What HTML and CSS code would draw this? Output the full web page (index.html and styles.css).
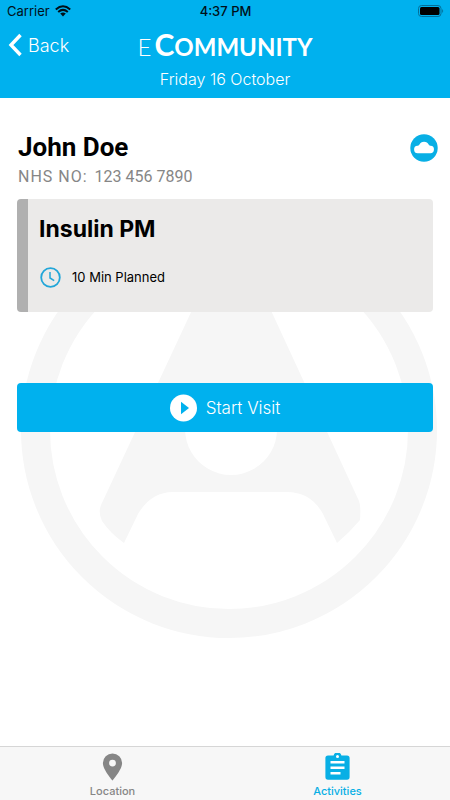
FILE: index.html
```html
<!DOCTYPE html>
<html lang="en">
<head>
<meta charset="utf-8">
<meta name="viewport" content="width=device-width, initial-scale=1">
<title>eCommunity</title>
<link rel="stylesheet" href="styles.css">
</head>
<body>
<header class="header">
  <div class="status">
    <div class="carrier">
      <span>Carrier</span>
      <svg width="16" height="12" viewBox="0 0 16 12" aria-hidden="true"><g fill="none" stroke="#001018" stroke-width="2"><path d="M.8 4.4Q8-2 15.2 4.4"/><path d="M3.2 7Q8 2.8 12.8 7"/></g><path fill="#001018" d="M5.2 8.6Q8 6.3 10.8 8.6L8 11.6z"/></svg>
    </div>
    <time class="clock">4:37 PM</time>
    <svg class="battery" width="26" height="12" viewBox="0 0 26 12" aria-hidden="true"><rect x=".5" y=".5" width="22.5" height="11" rx="3" fill="none" stroke="#036f98"/><rect x="2" y="2" width="19.5" height="8" rx="1.5" fill="#000"/><path fill="#036f98" d="M24.2 4v4q2-2 0-4"/></svg>
  </div>
  <div class="nav">
    <button class="back" type="button">
      <svg width="14" height="24" viewBox="0 0 14 24" aria-hidden="true"><path d="M12.500 2 3 12l9.500 10" fill="none" stroke="#fff" stroke-width="3.400"/></svg>
      <span>Back</span>
    </button>
    <h1 class="brand"><span class="brand-e">E</span><span class="brand-c">C</span>OMMUNITY</h1>
  </div>
  <p class="date">Friday 16 October</p>
</header>

<main class="main">
  <svg class="watermark" width="416" height="416" viewBox="0 0 416 416" aria-hidden="true">
    <circle cx="208" cy="208" r="193.5" fill="none" stroke="#f6f6f6" stroke-width="29"/>
    <path fill="#f6f6f6" fill-rule="evenodd" d="M186 56H235L338 279Q340 284 339 298Q329 310 316 321L302 292Q290 270 266 270H152Q130 270 117 292L103 321Q89 311 81 299Q77 291 80 283ZM210 161a46 46 0 1 0 .1 0z"/>
  </svg>
  <section class="patient">
    <div>
      <h2 class="name">John Doe</h2>
      <p class="nhs"><span class="nhs-label">NHS NO:</span><span>123 456 7890</span></p>
    </div>
    <svg class="cloud" width="28" height="28" viewBox="0 0 28 28" role="img" aria-label="Synced"><circle cx="14" cy="14" r="13.7" fill="#08afe5"/><path fill="#fff" d="M8 19.200a3.700 3.700 0 0 1-.4-7.400q1-.2 1.700-1a5.200 5.200 0 0 1 9.500 0q.7.900 1.700 1a3.700 3.700 0 0 1-.5 7.400z"/></svg>
  </section>
  <article class="card">
    <h3 class="task">Insulin PM</h3>
    <p class="planned">
      <svg width="22" height="22" viewBox="0 0 22 22" aria-hidden="true"><g fill="none" stroke="#22a6d8"><circle cx="11.5" cy="11.5" r="9.3" stroke-width="1.8"/><path d="M11 6v6l4.200 2.600" stroke-width="1.500"/></g></svg>
      <span>10 Min Planned</span>
    </p>
  </article>
  <button class="start" type="button">
    <svg width="28" height="28" viewBox="0 0 28 28" aria-hidden="true"><circle cx="13.5" cy="14" r="13.5" fill="#fff"/><path fill="#00b1ee" d="M11 7.800 19 14l-8 6.200z"/></svg>
    <span>Start Visit</span>
  </button>
</main>

<nav class="tabs">
  <a class="tab" href="#location">
    <svg width="26" height="28" viewBox="0 0 26 28" aria-hidden="true"><path fill="#868686" fill-rule="evenodd" d="M12.500.5a9.600 9.600 0 0 0-9.600 9.600c0 6.900 9.600 17.500 9.600 17.500s9.600-10.600 9.600-17.500A9.600 9.600 0 0 0 12.500.5zm0 6.200a3.400 3.400 0 1 1 0 6.800 3.400 3.400 0 0 1 0-6.800z"/></svg>
    <span>Location</span>
  </a>
  <a class="tab tab-active" href="#activities" aria-current="page">
    <svg width="26" height="28" viewBox="0 0 26 28" aria-hidden="true"><path fill="#08afe5" d="M3 2.500h5.600a4 4 0 0 1 7.800 0H22a2.600 2.600 0 0 1 2.600 2.600v19A2.600 2.600 0 0 1 22 26.700H3a2.600 2.600 0 0 1-2.600-2.600v-19A2.600 2.600 0 0 1 3 2.500z"/><circle cx="12.500" cy="3.600" r="1.500" fill="#fff"/><path d="M5.500 9.200h14M5.500 14.700h14M5.500 20.200h10" stroke="#fff" stroke-width="2.600"/></svg>
    <span>Activities</span>
  </a>
</nav>
</body>
</html>
```
FILE: styles.css
```css
* { box-sizing: border-box; }

body {
  margin: 0;
  min-height: 100vh;
  display: flex;
  flex-direction: column;
  background: #fff;
  color: #000;
  font-family: Inter, "Liberation Sans", sans-serif;
}

h1, h2, h3, p { margin: 0; }
svg { display: block; flex: none; }
button { border: 0; font: inherit; cursor: pointer; }

.header {
  background: #00b1ee;
  color: #fff;
  padding-bottom: 7px;
}

.status {
  display: grid;
  grid-template-columns: 1fr auto 1fr;
  align-items: center;
  height: 22px;
  padding: 0 6px 0 7px;
  color: #001018;
  font-size: 13px;
}
.carrier { display: flex; align-items: center; gap: 5px; }
.clock { font-weight: 500; }
.battery { justify-self: end; }

.nav {
  display: grid;
  grid-template-columns: 1fr auto 1fr;
  align-items: center;
  height: 46px;
  padding: 0 8px;
}
.back {
  display: flex;
  align-items: center;
  gap: 6px;
  justify-self: start;
  padding: 0;
  background: none;
  color: #fff;
  font-size: 18px;
  font-weight: 300;
}
.brand {
  font-family: Lato, sans-serif;
  font-size: 24px;
  font-weight: 700;
  line-height: 36px;
}
.brand-e { font-weight: 300; margin-right: 3px; }
.brand-c { font-size: 30px; }

.date {
  font-size: 16px;
  font-weight: 300;
  line-height: 23px;
  text-align: center;
}

.main {
  position: relative;
  flex: 1;
  padding: 32px 17px;
}
.watermark {
  position: absolute;
  top: 124px;
  left: 50%;
  margin-left: -204px;
}

.patient {
  position: relative;
  display: flex;
  justify-content: space-between;
  margin-right: -5px;
  padding-left: 1px;
}
.name {
  font-family: Roboto, sans-serif;
  font-size: 26px;
  font-weight: 700;
  line-height: 34px;
}
.nhs {
  display: flex;
  gap: 7px;
  color: #868686;
  font-family: Roboto, sans-serif;
  font-size: 16px;
  line-height: 26px;
}
.nhs-label { letter-spacing: 1px; }
.cloud { margin-top: 4px; }

.card {
  position: relative;
  margin-top: 9px;
  padding: 14px 11px 24px;
  border-left: 11px solid #b0b0b0;
  border-radius: 4px;
  background: #ebeae9;
}
.task {
  font-size: 23px;
  font-weight: 700;
  line-height: 32px;
}
.planned {
  display: flex;
  align-items: center;
  gap: 11px;
  margin-top: 21px;
  font-size: 13px;
}

.start {
  position: relative;
  display: flex;
  align-items: center;
  justify-content: center;
  gap: 8px;
  width: 100%;
  height: 49px;
  margin-top: 71px;
  padding: 0;
  border-radius: 4px;
  background: #00b1ee;
  color: #fff;
  font-size: 17px;
  font-weight: 300;
}

.tabs {
  display: grid;
  grid-template-columns: 1fr 1fr;
  border-top: 1px solid #d6d6d6;
  background: #f7f7f7;
}
.tab {
  display: flex;
  flex-direction: column;
  align-items: center;
  gap: 3px;
  padding: 6px 0 1px;
  color: #868686;
  font-size: 11px;
  font-weight: 500;
  line-height: 15px;
  text-decoration: none;
}
.tab-active { color: #08afe5; }
```
